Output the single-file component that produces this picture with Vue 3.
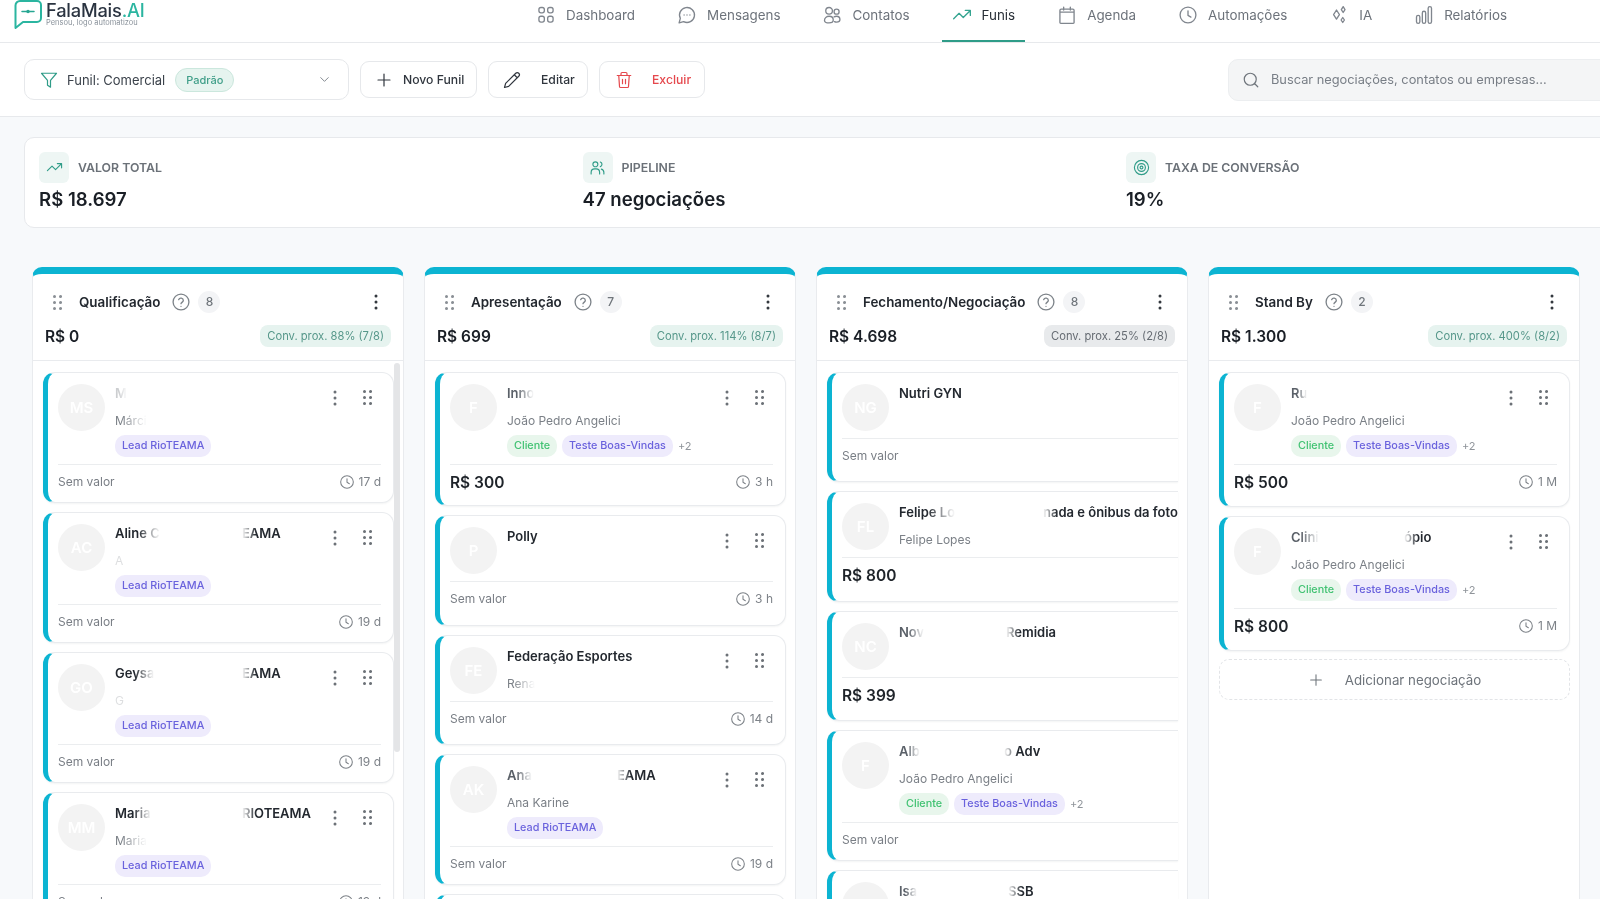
<script setup>
const icons = {
  grid: 'M6 3h1.500A2.500 2.500 0 0 1 10 5.500V7a2.500 2.500 0 0 1-2.500 2.500H6A2.500 2.500 0 0 1 3.500 7V5.500A2.500 2.500 0 0 1 6 3zM16.500 3H18a2.500 2.500 0 0 1 2.500 2.500V7A2.500 2.500 0 0 1 18 9.500h-1.500A2.500 2.500 0 0 1 14 7V5.500A2.500 2.500 0 0 1 16.500 3zM6 13.500h1.500A2.500 2.500 0 0 1 10 16v2a2.500 2.500 0 0 1-2.500 2.500H6A2.500 2.500 0 0 1 3.500 18v-2A2.500 2.500 0 0 1 6 13.500zM16.500 13.500H18a2.500 2.500 0 0 1 2.500 2.500v2a2.500 2.500 0 0 1-2.500 2.500h-1.500A2.500 2.500 0 0 1 14 18v-2a2.500 2.500 0 0 1 2.500-2.500z',
  chat: 'M7.900 20A9 9 0 1 0 4 16.100L2.500 21.500zM8.500 12h.01M12 12h.01M15.500 12h.01',
  users: 'M8.500 3a4 4 0 1 0 0 8 4 4 0 0 0 0-8zM17.500 5a3 3 0 1 0 0 6 3 3 0 0 0 0-6zM3 18.500C3 15.500 5.500 13.500 8.500 13.500s5 2 5 4.500-2 3.500-5 3.500-5.500-.5-5.500-3zM14.500 14.200c.9-.5 2-.7 3-.7 2.500 0 4 1.700 4 3.800s-1.500 3.200-4 3.200c-1 0-1.800-.2-2.500-.6',
  trend: 'M22 6.500l-8.500 8.500-5-5L2 16.500M16 6.500h6v6',
  calendar: 'M5 5h14a1.500 1.500 0 0 1 1.500 1.500V21a1 1 0 0 1-1 1h-15a1 1 0 0 1-1-1V6.500A1.500 1.500 0 0 1 5 5zM8 2.500V6M16 2.500V6M3.500 8.500h17',
  clock: 'M12 2.500a9.500 9.500 0 1 0 0 19 9.500 9.500 0 0 0 0-19zM12 7v5.500l3.500 2',
  sparkles: 'M9 6l3.500 5.500L9 17l-3.500-5.500zM17 2l2.200 3.500L17 9l-2.200-3.500zM16.500 15l2 3-2 3-2-3z',
  bars: 'M3 14.500a2 2 0 0 1 4 0V20a2 2 0 0 1-4 0zM10 9.500a2 2 0 0 1 4 0V20a2 2 0 0 1-4 0zM17 4a2 2 0 0 1 4 0v16a2 2 0 0 1-4 0z',
  funnel: 'M22 3H2l8 9.500V19l4 2.500v-9z',
  chevron: 'M6 9l6 6 6-6',
  plus: 'M12 4v16M4 12h16',
  pencil: 'M17 3a2.800 2.800 0 0 1 4 4L7.500 20.500 2 22l1.500-5.500zM15 5l4 4',
  trash: 'M3 6h18M8 6V3.500A1.500 1.500 0 0 1 9.500 2h5A1.500 1.500 0 0 1 16 3.500V6M5 6l1 14.500A1.500 1.500 0 0 0 7.500 22h9a1.500 1.500 0 0 0 1.500-1.500L19 6M10 11v6M14 11v6',
  search: 'M11 3a8 8 0 1 0 0 16 8 8 0 0 0 0-16zM21 21l-4.300-4.300',
  pipeline: 'M9 4a3.500 3.500 0 1 0 0 7 3.500 3.500 0 0 0 0-7zM3 21v-2a5 5 0 0 1 5-5h2a5 5 0 0 1 5 5v2M16 4.200a3.500 3.500 0 0 1 0 6.600M21 21v-2a5 5 0 0 0-3.500-4.700',
  target: 'M12 2a10 10 0 1 0 0 20 10 10 0 0 0 0-20zM12 6.500a5.500 5.500 0 1 0 0 11 5.500 5.500 0 0 0 0-11zM12 10a2 2 0 1 0 0 4 2 2 0 0 0 0-4z',
  help: 'M12 2.500a9.500 9.500 0 1 0 0 19 9.500 9.500 0 0 0 0-19zM9.200 9.200a2.900 2.900 0 0 1 5.600 1c0 1.900-2.800 2.500-2.800 3.800M12 17.200h.01'
}

const navItems = [
  { label: 'Dashboard', icon: 'grid' },
  { label: 'Mensagens', icon: 'chat' },
  { label: 'Contatos', icon: 'users' },
  { label: 'Funis', icon: 'trend', active: true },
  { label: 'Agenda', icon: 'calendar' },
  { label: 'Automações', icon: 'clock' },
  { label: 'IA', icon: 'sparkles' },
  { label: 'Relatórios', icon: 'bars' }
]

const stats = [
  { label: 'VALOR TOTAL', value: 'R$ 18.697', icon: 'trend' },
  { label: 'PIPELINE', value: '47 negociações', icon: 'pipeline' },
  { label: 'TAXA DE CONVERSÃO', value: '19%', icon: 'target' }
]

const joao = 'João Pedro Angelici'
const lead = ['lead']
const full = ['cliente', 'teste']
const tagLabels = { lead: 'Lead RioTEAMA', cliente: 'Cliente', teste: 'Teste Boas-Vindas' }

// titles with a hidden middle: `a` fades out, `b` fades in after `w` px
const columns = [
  {
    name: 'Qualificação', count: 8, total: 'R$ 0', conv: 'Conv. prox. 88% (7/8)', scroll: true,
    cards: [
      { ini: 'MS', a: 'M', faint: true, sub: 'Márci', subFade: true, tags: lead, time: '17 d' },
      { ini: 'AC', a: 'Aline C', dark: true, w: 127, b: 'EAMA', sub: 'A', subFaint: true, tags: lead, time: '19 d' },
      { ini: 'GO', a: 'Geysa', dark: true, w: 127, b: 'EAMA', sub: 'G', subFaint: true, tags: lead, time: '19 d' },
      { ini: 'MM', a: 'Maria', dark: true, w: 127, b: 'RIOTEAMA', sub: 'Maria', subFade: true, tags: lead, time: '19 d' }
    ]
  },
  {
    name: 'Apresentação', count: 7, total: 'R$ 699', conv: 'Conv. prox. 114% (8/7)',
    cards: [
      { ini: 'F', a: 'Inno', sub: joao, tags: full, more: '+2', value: 'R$ 300', time: '3 h', foot: 41 },
      { ini: 'P', a: 'Polly', solid: true, time: '3 h' },
      { ini: 'FE', a: 'Federação Esportes', solid: true, sub: 'Rena', subFade: true, time: '14 d', foot: 43 },
      { ini: 'AK', a: 'Ana', w: 110, b: 'EAMA', sub: 'Ana Karine', tags: lead, time: '19 d' },
      { ini: 'F', a: '', time: '' }
    ]
  },
  {
    name: 'Fechamento/Negociação', count: 8, total: 'R$ 4.698', conv: 'Conv. prox. 25% (2/8)', neutral: true, cut: true,
    cards: [
      { ini: 'NG', a: 'Nutri GYN', solid: true, foot: 43 },
      { ini: 'FL', a: 'Felipe Lo', dark: true, w: 144, b: 'nada e ônibus da foto', sub: 'Felipe Lopes', value: 'R$ 800' },
      { ini: 'NC', a: 'Nov', w: 107, b: 'Remidia', value: 'R$ 399', foot: 43 },
      { ini: 'F', a: 'Alb', w: 105, b: 'o Adv', sub: joao, tags: full, more: '+2' },
      { ini: 'IS', a: 'Isa', w: 109, b: 'SSB' }
    ]
  },
  {
    name: 'Stand By', count: 2, total: 'R$ 1.300', conv: 'Conv. prox. 400% (8/2)', add: true,
    cards: [
      { ini: 'F', a: 'Ru', sub: joao, tags: full, more: '+2', value: 'R$ 500', time: '1 M' },
      { ini: 'F', a: 'Clini', w: 113, b: 'ópio', sub: joao, tags: full, more: '+2', value: 'R$ 800', time: '1 M' }
    ]
  }
]

const footClass = (card) => {
  if (card.foot) return 'foot-' + card.foot
  if (!card.tags) return 'foot-44'
  return card.value ? 'foot-42' : 'foot-38'
}
</script>

<template>
  <div class="page">
    <header class="topbar">
      <div class="brand">
        <svg class="brand-mark" viewBox="0 0 28 29" fill="none">
          <path d="M6 1h17a4 4 0 0 1 4 4v13a4 4 0 0 1-4 4H9l-7.500 6V5.500A4.500 4.500 0 0 1 6 1z" />
          <path class="brand-dash" d="M8 11.500h12" />
          <path class="brand-dot" d="M14 11.500h.01" />
        </svg>
        <div class="brand-text">
          <div class="brand-name">FalaMais<span>.AI</span></div>
          <div class="brand-tag">Pensou, logo automatizou</div>
        </div>
      </div>
      <nav class="nav">
        <a v-for="item in navItems" :key="item.label" class="nav-item" :class="{ active: item.active }">
          <svg class="ico nav-ico" viewBox="0 0 24 24"><path :d="icons[item.icon]" /></svg>
          {{ item.label }}
        </a>
      </nav>
    </header>

    <section class="toolbar">
      <div class="funnel-select">
        <svg class="ico funnel-ico" viewBox="0 0 24 24"><path :d="icons.funnel" /></svg>
        <span class="funnel-name">Funil: Comercial</span>
        <span class="badge-default">Padrão</span>
        <svg class="ico chevron" viewBox="0 0 24 24"><path :d="icons.chevron" /></svg>
      </div>
      <button class="btn btn-new" type="button">
        <svg class="ico" viewBox="0 0 24 24"><path :d="icons.plus" /></svg>
        Novo Funil
      </button>
      <button class="btn btn-edit" type="button">
        <svg class="ico" viewBox="0 0 24 24"><path :d="icons.pencil" /></svg>
        Editar
      </button>
      <button class="btn btn-del" type="button">
        <svg class="ico" viewBox="0 0 24 24"><path :d="icons.trash" /></svg>
        Excluir
      </button>
      <div class="search">
        <svg class="ico" viewBox="0 0 24 24"><path :d="icons.search" /></svg>
        <span>Buscar negociações, contatos ou empresas...</span>
      </div>
    </section>

    <section class="stats">
      <div v-for="stat in stats" :key="stat.label" class="stat">
        <div class="stat-head">
          <span class="stat-icon">
            <svg class="ico" viewBox="0 0 24 24"><path :d="icons[stat.icon]" /></svg>
          </span>
          <span class="stat-label">{{ stat.label }}</span>
        </div>
        <div class="stat-value">{{ stat.value }}</div>
      </div>
    </section>

    <section class="board">
      <div v-for="col in columns" :key="col.name" class="column">
        <div class="col-head">
          <div class="col-title-row">
            <svg class="grip" viewBox="0 0 9 15"><path d="M1.500 1.500h.01M7.500 1.500h.01M1.500 7.500h.01M7.500 7.500h.01M1.500 13.500h.01M7.500 13.500h.01" /></svg>
            <span class="col-title">{{ col.name }}</span>
            <svg class="ico help" viewBox="0 0 24 24"><path :d="icons.help" /></svg>
            <span class="col-count">{{ col.count }}</span>
            <svg class="dots col-dots" viewBox="0 0 6 16"><path d="M3 2h.01M3 8h.01M3 14h.01" /></svg>
          </div>
          <div class="col-sum-row">
            <span class="col-total">{{ col.total }}</span>
            <span class="col-conv" :class="{ neutral: col.neutral }">{{ col.conv }}</span>
          </div>
        </div>

        <div class="col-list">
          <article
            v-for="(card, i) in col.cards"
            :key="i"
            class="card"
            :class="{ cut: col.cut }"
          >
            <div class="card-top">
              <div class="avatar">{{ card.ini }}</div>
              <div class="card-body">
                <div class="card-title" :class="{ faint: card.faint }">
                  <span v-if="card.solid">{{ card.a }}</span>
                  <span v-else class="part" :style="card.w ? { width: card.w + 'px' } : null">
                    <span class="fade-out" :class="{ dark: card.dark }">{{ card.a }}</span>
                  </span>
                  <span v-if="card.b" class="fade-in">{{ card.b }}</span>
                </div>
                <div v-if="card.sub" class="card-sub" :class="{ 'sub-fade': card.subFade, 'sub-faint': card.subFaint }">
                  <span>{{ card.sub }}</span>
                </div>
                <div v-if="card.tags" class="tags">
                  <span v-for="tag in card.tags" :key="tag" class="tag" :class="'tag-' + tag">{{ tagLabels[tag] }}</span>
                  <span v-if="card.more" class="tag-more">{{ card.more }}</span>
                </div>
              </div>
              <div v-if="!col.cut" class="card-actions">
                <svg class="dots" viewBox="0 0 6 16"><path d="M3 2h.01M3 8h.01M3 14h.01" /></svg>
                <svg class="grip card-grip" viewBox="0 0 9 15"><path d="M1.500 1.500h.01M7.500 1.500h.01M1.500 7.500h.01M7.500 7.500h.01M1.500 13.500h.01M7.500 13.500h.01" /></svg>
              </div>
            </div>
            <div class="card-foot" :class="footClass(card)">
              <span v-if="card.value" class="card-value">{{ card.value }}</span>
              <span v-else class="card-novalue">Sem valor</span>
              <span v-if="card.time" class="card-time">
                <svg class="ico" viewBox="0 0 24 24"><path :d="icons.clock" /></svg>
                {{ card.time }}
              </span>
            </div>
          </article>

          <div v-if="col.add" class="add-deal">
            <svg class="ico" viewBox="0 0 24 24"><path :d="icons.plus" /></svg>
            Adicionar negociação
          </div>
        </div>

        <div v-if="col.scroll" class="scroll-thumb"></div>
      </div>
    </section>
  </div>
</template>

<style>
html,
body {
  margin: 0;
  overflow: hidden;
  background: #f7f9fb;
}
</style>

<style scoped>
.page {
  width: 1600px;
  height: 899px;
  overflow: hidden;
  background: #f7f9fb;
  color: #1c2128;
  font-family: Inter, 'Noto Sans', sans-serif;
  filter: blur(0.5px);
}

.ico {
  fill: none;
  stroke: currentColor;
  stroke-width: 1.6;
  stroke-linecap: round;
  stroke-linejoin: round;
  flex-shrink: 0;
}

/* Top bar */
.topbar {
  display: flex;
  height: 43px;
  box-sizing: border-box;
  background: #fff;
  border-bottom: 1px solid #e7e9ec;
}

.brand {
  display: flex;
  width: 526px;
  padding-left: 14px;
  box-sizing: border-box;
  gap: 4px;
}

.brand-mark {
  width: 28px;
  height: 29px;
  fill: none;
  stroke: #2bb5a0;
  stroke-width: 2;
  stroke-linejoin: round;
  flex-shrink: 0;
}

.brand-dash {
  stroke: #27a692;
  stroke-width: 1.500;
  stroke-linecap: round;
}

.brand-dot {
  stroke: #27a692;
  stroke-width: 3.500;
  stroke-linecap: round;
}

.brand-name {
  font-size: 18.300px;
  font-weight: 500;
  line-height: 20px;
  color: #2a3340;
  letter-spacing: -0.2px;
}

.brand-name span {
  color: #2bb5a0;
}

.brand-tag {
  font-size: 7.500px;
  line-height: 10px;
  margin-top: -2px;
  color: #8a929b;
}

.nav {
  display: flex;
  gap: 22px;
}

.nav-item {
  display: flex;
  align-items: flex-start;
  gap: 10px;
  height: 42px;
  box-sizing: border-box;
  padding: 7px 10px 0;
  font-size: 13.400px;
  line-height: 16px;
  color: #6d737b;
  border-bottom: 2px solid transparent;
}

.nav-item.active {
  color: #2a3038;
  border-bottom-color: #2f9c88;
}

.nav-ico {
  width: 20px;
  height: 20px;
  margin-top: -2px;
  color: #80868e;
}

.active .nav-ico {
  color: #34a490;
}

/* Toolbar */
.toolbar {
  display: flex;
  align-items: center;
  height: 74px;
  box-sizing: border-box;
  padding-left: 24px;
  gap: 11px;
  background: #fff;
  border-bottom: 1px solid #e7e9ec;
}

.funnel-select {
  display: flex;
  align-items: center;
  width: 325px;
  height: 41px;
  box-sizing: border-box;
  padding: 0 16px 0 15px;
  background: #fff;
  border: 1px solid #e6e8eb;
  border-radius: 10px;
  font-size: 13px;
  font-weight: 400;
  color: #3b424b;
}

.funnel-ico {
  width: 18px;
  height: 18px;
  margin-right: 9px;
  color: #2f9c88;
}

.badge-default {
  margin-left: 10px;
  padding: 0 10px;
  height: 24px;
  line-height: 22px;
  box-sizing: border-box;
  border-radius: 12px;
  background: #e6f4ef;
  border: 1px solid #cbe7dd;
  color: #3f9e88;
  font-size: 11px;
  font-weight: 500;
}

.chevron {
  margin-left: auto;
  width: 15px;
  height: 15px;
  color: #858b92;
}

.btn {
  display: flex;
  align-items: center;
  height: 37px;
  box-sizing: border-box;
  background: #fff;
  border: 1px solid #e6e8eb;
  border-radius: 9px;
  font-family: inherit;
  font-size: 12.200px;
  font-weight: 500;
  color: #30363e;
}

.btn .ico {
  width: 18px;
  height: 18px;
}

.btn-new {
  width: 117px;
  padding: 0 0 0 14px;
  gap: 10px;
}

.btn-edit {
  width: 100px;
  padding: 0 0 0 14px;
  gap: 20px;
}

.btn-del {
  width: 106px;
  padding: 0 0 0 15px;
  gap: 19px;
  color: #e5484d;
}

.search {
  display: flex;
  align-items: center;
  gap: 11px;
  margin-left: auto;
  width: 384px;
  margin-right: -12px;
  height: 42px;
  box-sizing: border-box;
  padding-left: 13px;
  background: #f4f5f6;
  border: 1px solid #eceef0;
  border-radius: 10px;
  font-size: 12.800px;
  color: #787e86;
}

.search .ico {
  width: 18px;
  height: 18px;
  color: #6f757c;
}

/* Stats */
.stats {
  display: grid;
  grid-template-columns: repeat(3, 543.500px);
  width: 1660px;
  box-sizing: border-box;
  height: 91px;
  margin: 20px 0 0 24px;
  padding: 14px 14px;
  background: #fff;
  border: 1px solid #e7e9ec;
  border-radius: 10px;
}

.stat-head {
  display: flex;
  align-items: center;
  gap: 9px;
}

.stat-icon {
  display: flex;
  align-items: center;
  justify-content: center;
  width: 30px;
  height: 31px;
  border-radius: 6px;
  background: #eef6f4;
  color: #2f9c88;
}

.stat-icon .ico {
  width: 17px;
  height: 17px;
}

.stat-label {
  font-size: 12.300px;
  font-weight: 600;
  color: #6b7178;
}

.stat-value {
  margin-top: 4px;
  font-size: 18.600px;
  line-height: 24px;
  font-weight: 600;
  color: #1a1f26;
}

/* Board */
.board {
  display: flex;
  gap: 20px;
  margin: 39px 0 0 32px;
}

.column {
  position: relative;
  flex: 0 0 372px;
  height: 640px;
  box-sizing: border-box;
  overflow: hidden;
  background: #fff;
  border: 1px solid #e9ebee;
  border-top: 7px solid #0cb4d2;
  border-radius: 10px 10px 0 0;
}

.col-head {
  height: 87px;
  box-sizing: border-box;
  padding: 17px 12px 0;
  border-bottom: 1px solid #e9ebee;
}

.col-title-row {
  display: flex;
  align-items: center;
  height: 22px;
}

.grip {
  width: 9px;
  height: 15px;
  fill: none;
  stroke: #8a8f95;
  stroke-width: 3;
  stroke-linecap: round;
  flex-shrink: 0;
  margin-left: 8px;
  margin-right: 17px;
}

.col-title {
  font-size: 13.400px;
  font-weight: 600;
  color: #23282f;
}

.help {
  width: 20px;
  height: 20px;
  margin-left: 11px;
  color: #7d8389;
}

.col-count {
  width: 22px;
  height: 22px;
  margin-left: 7px;
  border-radius: 50%;
  background: #f3f4f6;
  color: #6f757b;
  font-size: 12px;
  font-weight: 500;
  line-height: 22px;
  text-align: center;
}

.dots {
  width: 6px;
  height: 16px;
  fill: none;
  stroke: #6c7177;
  stroke-width: 3;
  stroke-linecap: round;
  flex-shrink: 0;
}

.col-dots {
  margin-left: auto;
  margin-right: 12px;
  stroke: #33383e;
}

.col-sum-row {
  display: flex;
  align-items: center;
  justify-content: space-between;
  margin-top: 12px;
}

.col-total {
  font-size: 15.500px;
  font-weight: 600;
  color: #1a1f26;
}

.col-conv {
  height: 22px;
  padding: 0 7px;
  border-radius: 8px;
  background: #e6f3ef;
  color: #56978a;
  font-size: 11.200px;
  line-height: 22px;
}

.col-conv.neutral {
  background: #e8eaec;
  color: #666c73;
}

.col-list {
  display: flex;
  flex-direction: column;
  gap: 9px;
  padding: 11px 9px 0 10px;
}

.card {
  box-sizing: border-box;
  width: 351px;
  background: #fff;
  border: 1px solid #e9ebee;
  border-left: 5px solid #0cb4d2;
  border-radius: 12px;
  box-shadow: 0 1px 2px rgba(20, 30, 40, 0.05);
  flex-shrink: 0;
}

.card.cut {
  border-right: none;
  border-radius: 12px 0 0 12px;
}

.card-top {
  display: flex;
  gap: 10px;
  padding: 11px 12px 7px 10px;
  margin-right: 0;
}

.cut .card-top {
  padding-right: 0;
}

.avatar {
  width: 47px;
  height: 47px;
  border-radius: 50%;
  background: #f3f3f3;
  color: #fff;
  font-size: 15px;
  font-weight: 600;
  line-height: 47px;
  text-align: center;
  flex-shrink: 0;
}

.card-body {
  flex: 1;
  min-width: 0;
  overflow: hidden;
}

.card-title {
  display: flex;
  height: 18px;
  font-size: 13px;
  font-weight: 600;
  line-height: 18px;
  white-space: nowrap;
  color: #23282f;
}

.card-title.faint {
  opacity: 0.3;
}

.part {
  display: block;
  flex-shrink: 0;
}

.fade-out {
  display: inline-block;
  color: #5a6068;
  -webkit-mask-image: linear-gradient(to right, #000 35%, transparent 100%);
  mask-image: linear-gradient(to right, #000 35%, transparent 100%);
}

.fade-out.dark {
  color: #23282f;
  -webkit-mask-image: linear-gradient(to right, #000 50%, transparent 100%);
  mask-image: linear-gradient(to right, #000 50%, transparent 100%);
}

.fade-in {
  display: inline-block;
  -webkit-mask-image: linear-gradient(to right, transparent 0, #000 14px);
  mask-image: linear-gradient(to right, transparent 0, #000 14px);
}

.card-sub {
  margin-top: 11px;
  font-size: 12px;
  line-height: 16px;
  white-space: nowrap;
  color: #7b8087;
}

.card-sub span {
  display: inline-block;
}

.sub-fade span {
  -webkit-mask-image: linear-gradient(to right, #000 20%, transparent 100%);
  mask-image: linear-gradient(to right, #000 20%, transparent 100%);
}

.sub-faint {
  opacity: 0.25;
}

.tags {
  display: flex;
  align-items: center;
  gap: 5px;
  margin-top: 6px;
}

.tag {
  height: 22px;
  padding: 0 7px;
  border-radius: 10px;
  font-size: 10.800px;
  font-weight: 500;
  line-height: 22px;
  white-space: nowrap;
}

.tag-lead,
.tag-teste {
  background: #eeebfc;
  color: #6a62dd;
}

.tag-cliente {
  background: #e8f6ec;
  color: #41c272;
}

.tag-more {
  font-size: 11px;
  color: #8f949a;
}

.card-actions {
  display: flex;
  gap: 22px;
  align-items: flex-start;
  margin-top: 6px;
  margin-right: 9px;
}

.card-grip {
  margin: 0 0 0 3px;
  stroke: #6c7177;
}

.card-foot {
  display: flex;
  align-items: flex-start;
  justify-content: space-between;
  margin: 0 12px 0 10px;
  padding-top: 7px;
  box-sizing: border-box;
  border-top: 1px solid #ebedef;
  line-height: 20px;
}

.cut .card-foot {
  margin-right: 0;
}

.foot-38 {
  height: 38px;
}

.foot-41 {
  height: 41px;
}

.foot-42 {
  height: 42px;
}

.foot-43 {
  height: 43px;
}

.foot-44 {
  height: 44px;
}

.card-value {
  margin-top: 1px;
  font-size: 15.500px;
  font-weight: 600;
  color: #1f242a;
}

.card-novalue {
  font-size: 12px;
  color: #797e85;
}

.card-time {
  display: flex;
  align-items: center;
  gap: 4px;
  font-size: 12px;
  color: #7d8288;
}

.card-time .ico {
  width: 16px;
  height: 16px;
}

.add-deal {
  display: flex;
  align-items: center;
  justify-content: center;
  gap: 21px;
  width: 351px;
  height: 41px;
  box-sizing: border-box;
  margin-top: -1px;
  border: 1px dashed #e2e4e7;
  border-radius: 10px;
  font-size: 13.300px;
  color: #6e747b;
}

.add-deal .ico {
  width: 16px;
  height: 16px;
}

.scroll-thumb {
  position: absolute;
  top: 89px;
  right: 3px;
  width: 6px;
  height: 389px;
  border-radius: 3px;
  background: #e4e5e7;
}
</style>
